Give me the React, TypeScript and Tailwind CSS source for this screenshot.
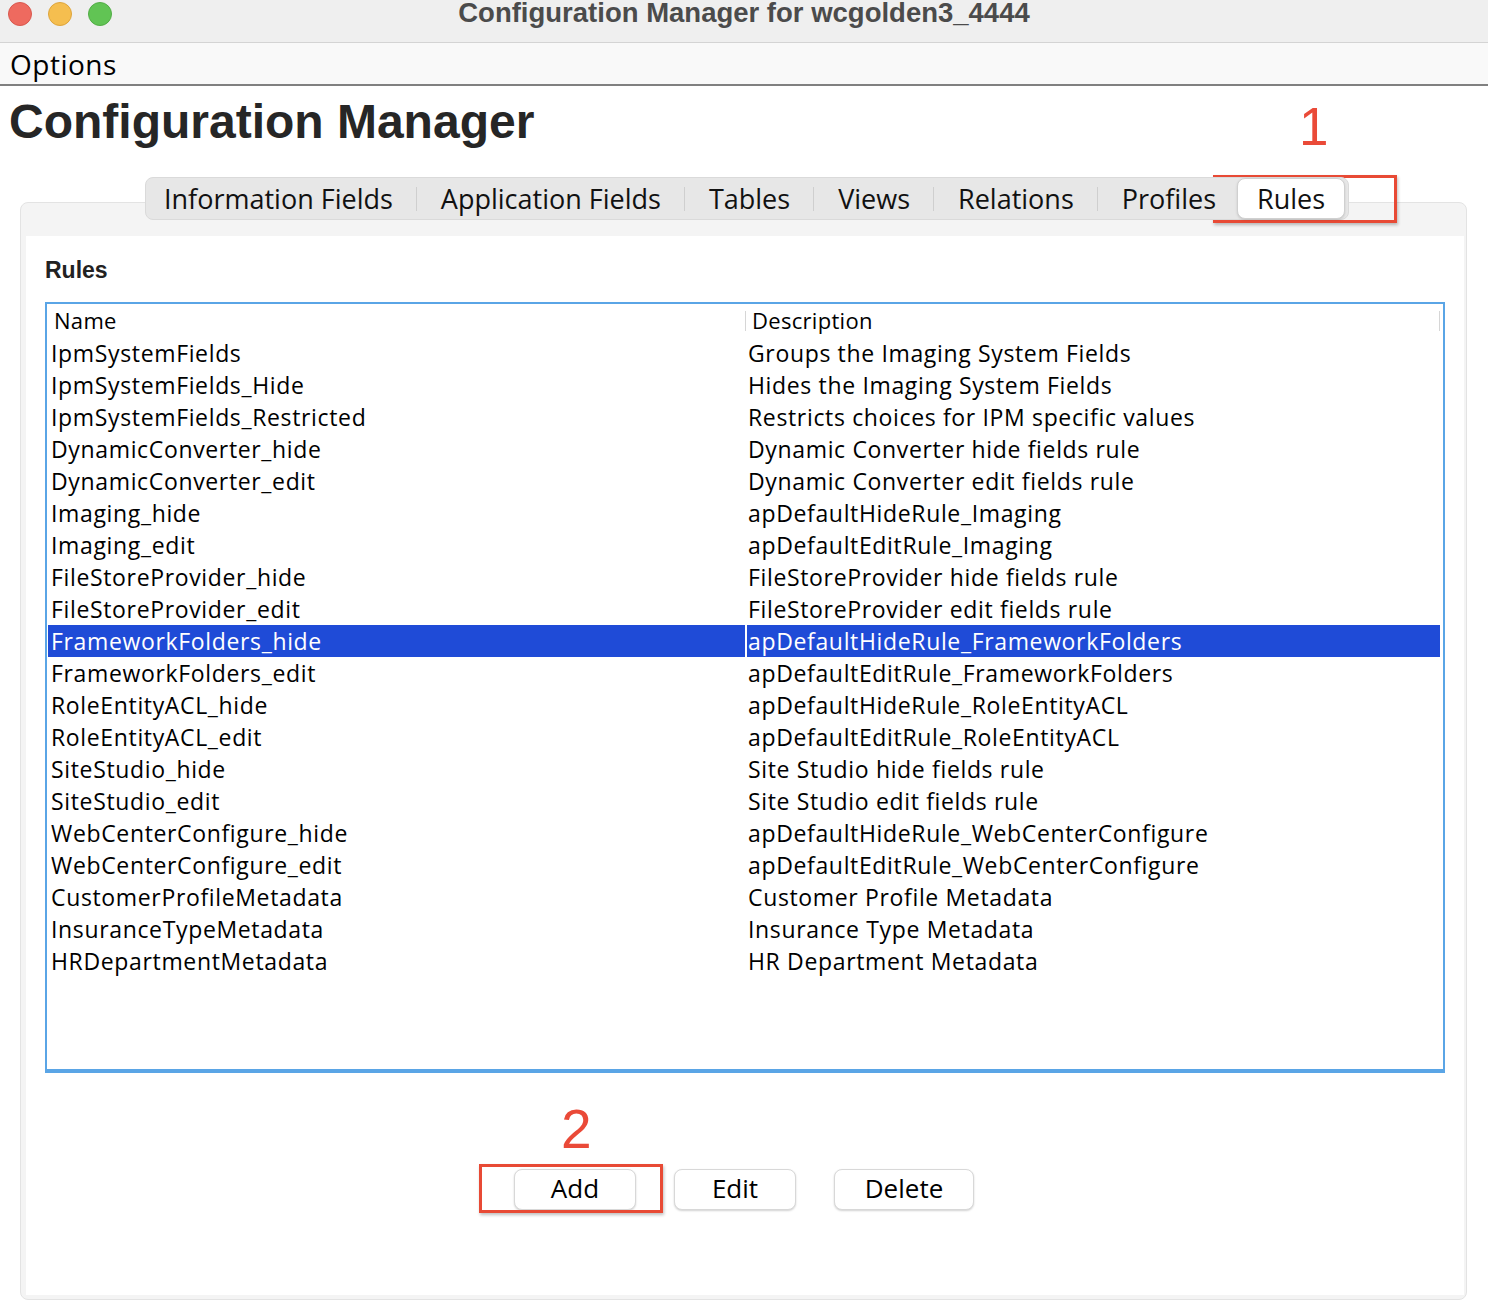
import React from 'react';

const rules: [string, string][] = [
  ['IpmSystemFields', 'Groups the Imaging System Fields'],
  ['IpmSystemFields_Hide', 'Hides the Imaging System Fields'],
  ['IpmSystemFields_Restricted', 'Restricts choices for IPM specific values'],
  ['DynamicConverter_hide', 'Dynamic Converter hide fields rule'],
  ['DynamicConverter_edit', 'Dynamic Converter edit fields rule'],
  ['Imaging_hide', 'apDefaultHideRule_Imaging'],
  ['Imaging_edit', 'apDefaultEditRule_Imaging'],
  ['FileStoreProvider_hide', 'FileStoreProvider hide fields rule'],
  ['FileStoreProvider_edit', 'FileStoreProvider edit fields rule'],
  ['FrameworkFolders_hide', 'apDefaultHideRule_FrameworkFolders'],
  ['FrameworkFolders_edit', 'apDefaultEditRule_FrameworkFolders'],
  ['RoleEntityACL_hide', 'apDefaultHideRule_RoleEntityACL'],
  ['RoleEntityACL_edit', 'apDefaultEditRule_RoleEntityACL'],
  ['SiteStudio_hide', 'Site Studio hide fields rule'],
  ['SiteStudio_edit', 'Site Studio edit fields rule'],
  ['WebCenterConfigure_hide', 'apDefaultHideRule_WebCenterConfigure'],
  ['WebCenterConfigure_edit', 'apDefaultEditRule_WebCenterConfigure'],
  ['CustomerProfileMetadata', 'Customer Profile Metadata'],
  ['InsuranceTypeMetadata', 'Insurance Type Metadata'],
  ['HRDepartmentMetadata', 'HR Department Metadata'],
];

const tabs = ['Information Fields', 'Application Fields', 'Tables', 'Views', 'Relations', 'Profiles'];

const SELECTED = 9;

export default function App() {
  return (
    <div className="relative w-[1488px] h-[1312px] overflow-hidden bg-white font-['Open_Sans',sans-serif] text-black">
      {/* title bar */}
      <div className="relative h-[43px] bg-[#efefef] border-b border-[#d4d4d4]">
        <div className="flex items-center gap-[16px] pl-[8px] h-[27px]">
          <span className="w-[24px] h-[24px] rounded-full bg-[#ee6a5f] border border-[#d9584e]" />
          <span className="w-[24px] h-[24px] rounded-full bg-[#f5be4f] border border-[#dea53c]" />
          <span className="w-[24px] h-[24px] rounded-full bg-[#61c454] border border-[#52ad46]" />
        </div>
        <div className="absolute left-0 right-0 top-[-3px] text-center font-['Liberation_Sans',sans-serif] font-bold text-[27.5px] leading-[32px] text-[#4b4b4b]">
          Configuration Manager for wcgolden3_4444
        </div>
      </div>

      {/* menu bar */}
      <div className="h-[43px] bg-[#f9f9f9] border-b-2 border-[#808080] flex items-center pl-[10px]">
        <span className="text-[28px] leading-none tracking-[0.5px]">Options</span>
      </div>

      <h1 className="mt-[12px] ml-[9px] font-['Liberation_Sans',sans-serif] font-bold text-[48px] leading-none text-[#262626]">
        Configuration Manager
      </h1>

      {/* tabs */}
      <div className="relative z-10 mt-[31px] ml-[145px] flex">
        <div className="flex items-center h-[43px] rounded-[8px] bg-[#e7e7e7] border border-[#dadada] pr-[3px]">
          {tabs.map((t, i) => (
            <React.Fragment key={t}>
              {i > 0 && <span className="w-px h-[24px] bg-[#cfcfcf]" />}
              <span className={`${i === 0 ? 'pl-[18px]' : 'pl-[24px]'} ${i === tabs.length - 1 ? 'pr-[21px]' : 'pr-[23px]'} text-[27px] leading-none text-[#111]`}>{t}</span>
            </React.Fragment>
          ))}
          <span className="h-[41px] px-[19px] flex items-center rounded-[8px] bg-white border border-[#d0d0d0] shadow-sm text-[27px] leading-none text-[#111]">
            Rules
          </span>
        </div>
      </div>

      {/* panel */}
      <div className="mt-[-18px] ml-[20px] w-[1447px] h-[1098px] rounded-[8px] bg-[#f4f4f4] border border-[#e3e3e3] pt-[33px] pl-[5px] pr-[2px] pb-[4px]">
        <div className="h-full bg-white pt-[23px] pl-[19px]">
          <div className="font-['Liberation_Sans',sans-serif] font-bold text-[23px] leading-none text-[#222]">Rules</div>

          <div className="mt-[20px] w-[1400px] h-[771px] border-2 border-b-4 border-[#5aa5e6] text-[23px] tracking-[0.65px]">
            <div className="flex h-[33px] items-center mr-[3px] text-[22px] tracking-[0.3px]">
              <div className="w-[698px] pl-[7px]">Name</div>
              <div className="flex items-center flex-1">
                <span className="w-px h-[20px] bg-[#d6d6d6]" />
                <span className="pl-[6px] flex-1">Description</span>
                <span className="w-px h-[20px] bg-[#d6d6d6]" />
              </div>
            </div>
            {rules.map(([name, desc], i) => {
              const sel = i === SELECTED;
              return (
                <div key={name} className="flex h-[32px] items-center mr-[3px]">
                  <div className={`w-[697px] ml-px h-full flex items-center pl-[3px] ${sel ? 'bg-[#1f4bd7] text-white' : ''}`}>{name}</div>
                  <div className={`flex-1 ml-[2px] h-full flex items-center pl-[1px] ${sel ? 'bg-[#1f4bd7] text-white' : ''}`}>{desc}</div>
                </div>
              );
            })}
          </div>

          {/* buttons */}
          <div className="mt-[96px] ml-[469px] flex gap-[38px]">
            <button className="w-[122px] h-[41px] pb-[3px] rounded-[8px] bg-white border border-[#d8d8d8] shadow-[0_1px_2px_rgba(0,0,0,0.18)] text-[26px] leading-none">Add</button>
            <button className="w-[122px] h-[41px] pb-[3px] rounded-[8px] bg-white border border-[#d8d8d8] shadow-[0_1px_2px_rgba(0,0,0,0.18)] text-[26px] leading-none">Edit</button>
            <button className="w-[140px] h-[41px] pb-[3px] rounded-[8px] bg-white border border-[#d8d8d8] shadow-[0_1px_2px_rgba(0,0,0,0.18)] text-[26px] leading-none">Delete</button>
          </div>
        </div>
      </div>

      {/* annotations */}
      <div className="absolute left-[1299px] top-[100px] font-['Liberation_Sans',sans-serif] text-[53px] leading-none text-[#ea4a38]">1</div>
      <div className="absolute left-[1213px] top-[175px] w-[184px] h-[48px] border-[3px] border-[#e84a35] shadow-[1px_2px_3px_rgba(0,0,0,0.25)]" />
      <div className="absolute left-[561px] top-[1102px] font-['Liberation_Sans',sans-serif] text-[55px] leading-none text-[#ea4a38]">2</div>
      <div className="absolute left-[479px] top-[1164px] w-[184px] h-[49px] border-[3px] border-[#e84a35] shadow-[1px_2px_3px_rgba(0,0,0,0.25)]" />
    </div>
  );
}
